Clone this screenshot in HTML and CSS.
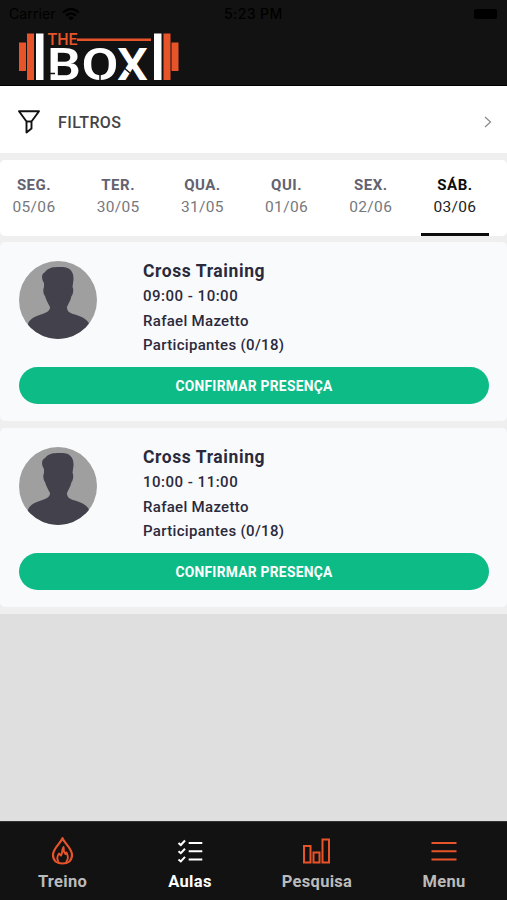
FILE: index.html
```html
<!DOCTYPE html>
<html lang="pt-BR">
<head>
<meta charset="utf-8">
<meta name="viewport" content="width=device-width, initial-scale=1">
<title>The Box - Aulas</title>
<link rel="stylesheet" href="styles.css">
</head>
<body>
<svg width="0" height="0" class="defs" aria-hidden="true">
  <defs>
    <clipPath id="round"><circle cx="39" cy="39" r="39"/></clipPath>
    <symbol id="avatar" viewBox="0 0 78 78">
      <g clip-path="url(#round)">
        <path fill="#9f9f9f" d="M0 0h78v78H0z"/>
        <path fill="#42414c" d="M26 11C30 5.500 37 6 42 6C51 5.500 55 11 54.500 18.500L53.500 26C55 28 54 34 52.500 35C51.500 40 49 43 48 46C48 50 50 52 56 53.500C64 56 69 59 70 63L78 78H0L9 63C10 59 14 56 22 53.500C28 51.500 31 50 31 46C29 42 27 39 26 35C24 33 24 28 25 26L25 22C22.500 18 22 13 26 11Z"/>
      </g>
    </symbol>
  </defs>
</svg>
<div class="app">
  <header class="header">
    <div class="status">
      <span class="carrier">Carrier</span>
      <svg class="wifi" width="18" height="13" viewBox="0 0 18 13"><path d="M1 4.500Q9-2.500 17 4.500M4 7.500Q9 3.500 14 7.500" fill="none" stroke="#000" stroke-width="2.300"/><path d="M9 12.500L6 9.500Q9 7.500 12 9.500Z"/></svg>
      <span class="clock">5:23 PM</span>
      <span class="battery"></span>
    </div>
    <svg class="logo" width="160" height="48" viewBox="0 0 160 48">
      <g fill="#e8542a"><path d="M0 9.500h7V38H0zM8 .5h7V47H8zM144.500 .5h7V47h-7zM152.500 9.500h7V38h-7zM58 5.500h74v2.600H58z"/></g>
      <path fill="#fff" d="M17 .5h7.500V47H17zM135 .5h7.500V47H135z"/>
      <text class="logo-the" x="28.500" y="11.800" textLength="30" lengthAdjust="spacingAndGlyphs">THE</text>
      <text class="logo-b" x="28" y="46.500" textLength="34" lengthAdjust="spacingAndGlyphs">B</text>
      <text class="logo-b" x="62.500" y="46.500" textLength="37" lengthAdjust="spacingAndGlyphs">O</text>
      <text class="logo-b" x="98" y="46.500" textLength="31" lengthAdjust="spacingAndGlyphs">X</text>
      <path stroke="#121212" stroke-width="1.500" d="M30 40.500h6M81 39v9M104 34l7 6"/>
    </svg>
  </header>
  <section class="filter">
    <svg width="22" height="24" viewBox="0 0 22 24" fill="none" stroke="#111" stroke-width="1.900" stroke-linejoin="round"><path d="M1 1.200H21L13.500 11.500V18.500L8.500 22.500V11.500Z"/><path d="M8.500 11.500h5"/></svg>
    <span class="filter-label">FILTROS</span>
    <svg class="chevron" width="8" height="12" viewBox="0 0 8 12" fill="none" stroke="#8d8d8d" stroke-width="1.300"><path d="M1 1l5.500 5L1 11"/></svg>
  </section>
  <div class="days-wrap">
    <nav class="days">
      <div class="day"><b>SEG.</b><span>05/06</span></div>
      <div class="day"><b>TER.</b><span>30/05</span></div>
      <div class="day"><b>QUA.</b><span>31/05</span></div>
      <div class="day"><b>QUI.</b><span>01/06</span></div>
      <div class="day"><b>SEX.</b><span>02/06</span></div>
      <div class="day active"><b>SÁB.</b><span>03/06</span></div>
    </nav>
  </div>
  <main class="classes">
    <article class="card">
      <div class="info">
        <svg class="avatar" width="78" height="78"><use href="#avatar"/></svg>
        <div class="details">
          <h2>Cross Training</h2>
          <p class="time">09:00 - 10:00</p>
          <p class="coach">Rafael Mazetto</p>
          <p class="people">Participantes (0/18)</p>
        </div>
      </div>
      <button class="confirm">CONFIRMAR PRESENÇA</button>
    </article>
    <article class="card">
      <div class="info">
        <svg class="avatar" width="78" height="78"><use href="#avatar"/></svg>
        <div class="details">
          <h2>Cross Training</h2>
          <p class="time">10:00 - 11:00</p>
          <p class="coach">Rafael Mazetto</p>
          <p class="people">Participantes (0/18)</p>
        </div>
      </div>
      <button class="confirm">CONFIRMAR PRESENÇA</button>
    </article>
  </main>
  <footer class="tabs">
    <div class="tab">
      <svg width="28" height="28" viewBox="0 0 28 28" fill="none" stroke="#e8542a" stroke-width="2.200" stroke-linejoin="round"><path d="M13.500 1.200C12 6 4 11 4 18C4 23.500 8 26.500 13.500 26.500S23 23.500 23 18C23 11 15 6 13.500 1.200Z"/><path d="M9.500 25C7.500 21.500 8.500 18.500 10 16.500L12 18.500C14 15.500 12.500 12.500 14.500 10C14.500 14 15.500 16 16.500 17L17.500 15.500C19.500 19.500 19 23 17 25" stroke-width="1.900"/></svg>
      <span>Treino</span>
    </div>
    <div class="tab selected">
      <svg width="28" height="28" viewBox="0 0 28 28" fill="none" stroke="#fff" stroke-width="2"><path d="M2.500 6l2.300 2L9 3.500M2.500 14.200l2.300 2L9 11.700M2.500 22.400l2.300 2L9 19.900M12.700 6h13.600M12.700 14.200h13.600M12.700 22.400h13.600"/></svg>
      <span>Aulas</span>
    </div>
    <div class="tab">
      <svg width="28" height="28" viewBox="0 0 28 28" fill="none" stroke="#e8542a" stroke-width="2"><path d="M1 9h6.500v16.500H1zM10.500 15.500h6v10h-6zM19.500 2.500H26v23h-6.500z"/></svg>
      <span>Pesquisa</span>
    </div>
    <div class="tab">
      <svg width="28" height="28" viewBox="0 0 28 28" stroke="#e8542a" stroke-width="2"><path d="M1.500 6h25M1.500 14.200h25M1.500 22.400h25"/></svg>
      <span>Menu</span>
    </div>
  </footer>
</div>
</body>
</html>
```
FILE: styles.css
```css
* { box-sizing: border-box; }
body { margin: 0; font-family: Roboto, "Liberation Sans", sans-serif; color: #2b2a3c; }
.defs { position: absolute; }
h2, p { margin: 0; }
.app { width: 507px; height: 900px; display: flex; flex-direction: column; background: #dfdfdf; overflow: hidden; }
.header { height: 86px; flex: none; background: #121212; border-bottom: 1px solid #000; }
.status { height: 28px; padding: 0 10px 0 9px; display: flex; align-items: center; font: 14px/28px Inter, sans-serif; color: #000; }
.carrier { width: 47px; letter-spacing: .1px; }
.wifi { margin-left: 6px; }
.clock { margin-left: 144px; font-weight: 500; letter-spacing: .4px; white-space: nowrap; }
.battery { width: 23px; height: 10px; margin-left: auto; border-radius: 2px; background: #000; }
.logo { display: block; margin: 5px 0 0 19px; overflow: visible; }
.logo-the { font: 500 16px Roboto, sans-serif; fill: #e8542a; }
.logo-b { font: 600 45px Roboto, sans-serif; fill: #fff; }
.filter { height: 67px; flex: none; background: #fff; display: flex; align-items: center; padding: 5px 15px 0 18px; }
.filter-label { margin-left: 18px; font-size: 16px; font-weight: 500; letter-spacing: .4px; color: #444448; }
.chevron { margin-left: auto; }
.days-wrap { height: 83px; flex: none; padding-top: 7px; background: #efeff0; }
.days { height: 76px; display: grid; grid-template-columns: repeat(6, 68px); column-gap: 16.200px; background: #fff; border-radius: 5px; }
.day { height: 77px; padding-top: 14px; border-bottom: 4px solid transparent; display: flex; flex-direction: column; align-items: center; font-size: 15.500px; line-height: 22px; letter-spacing: .35px; color: #77777c; }
.day b { font-size: 15px; font-weight: 700; letter-spacing: .5px; color: #626270; }
.day.active { color: #222; border-color: #0c0c0c; }
.day.active b { color: #0c0c0c; }
.classes { flex: none; background: #efeff0; padding: 6px 0 7px; display: flex; flex-direction: column; gap: 7px; }
.card { height: 179px; padding: 19px 18px 0 19px; background: #f9fafc; border-radius: 5px; }
.info { display: flex; height: 106px; }
.details { margin-left: 46px; font-size: 15px; font-weight: 500; line-height: 24.500px; white-space: nowrap; }
.avatar { flex: none; }
h2 { margin-top: -1px; font-size: 17.500px; line-height: 22px; font-weight: 700; letter-spacing: .58px; }
.time { margin-top: 2px; letter-spacing: .5px; }
.coach { letter-spacing: .3px; }
.people { letter-spacing: .32px; }
.confirm { display: block; width: 100%; height: 37px; padding: 0; border: 0; border-radius: 19px; background: #0dbb87; color: #fff; font: 700 13.800px Roboto, sans-serif; letter-spacing: .27px; }
.tabs { height: 79px; margin-top: auto; flex: none; display: grid; grid-template-columns: repeat(4, 127px); background: #121212; color: #bbb; font-size: 16.500px; line-height: 20px; font-weight: 700; letter-spacing: .3px; border-top: 1px solid #333; }
.tab { padding: 15px 1px 0 0; display: flex; flex-direction: column; align-items: center; gap: 7px; }
.tab:first-child { padding-right: 2px; }
.selected { color: #fff; }
```
